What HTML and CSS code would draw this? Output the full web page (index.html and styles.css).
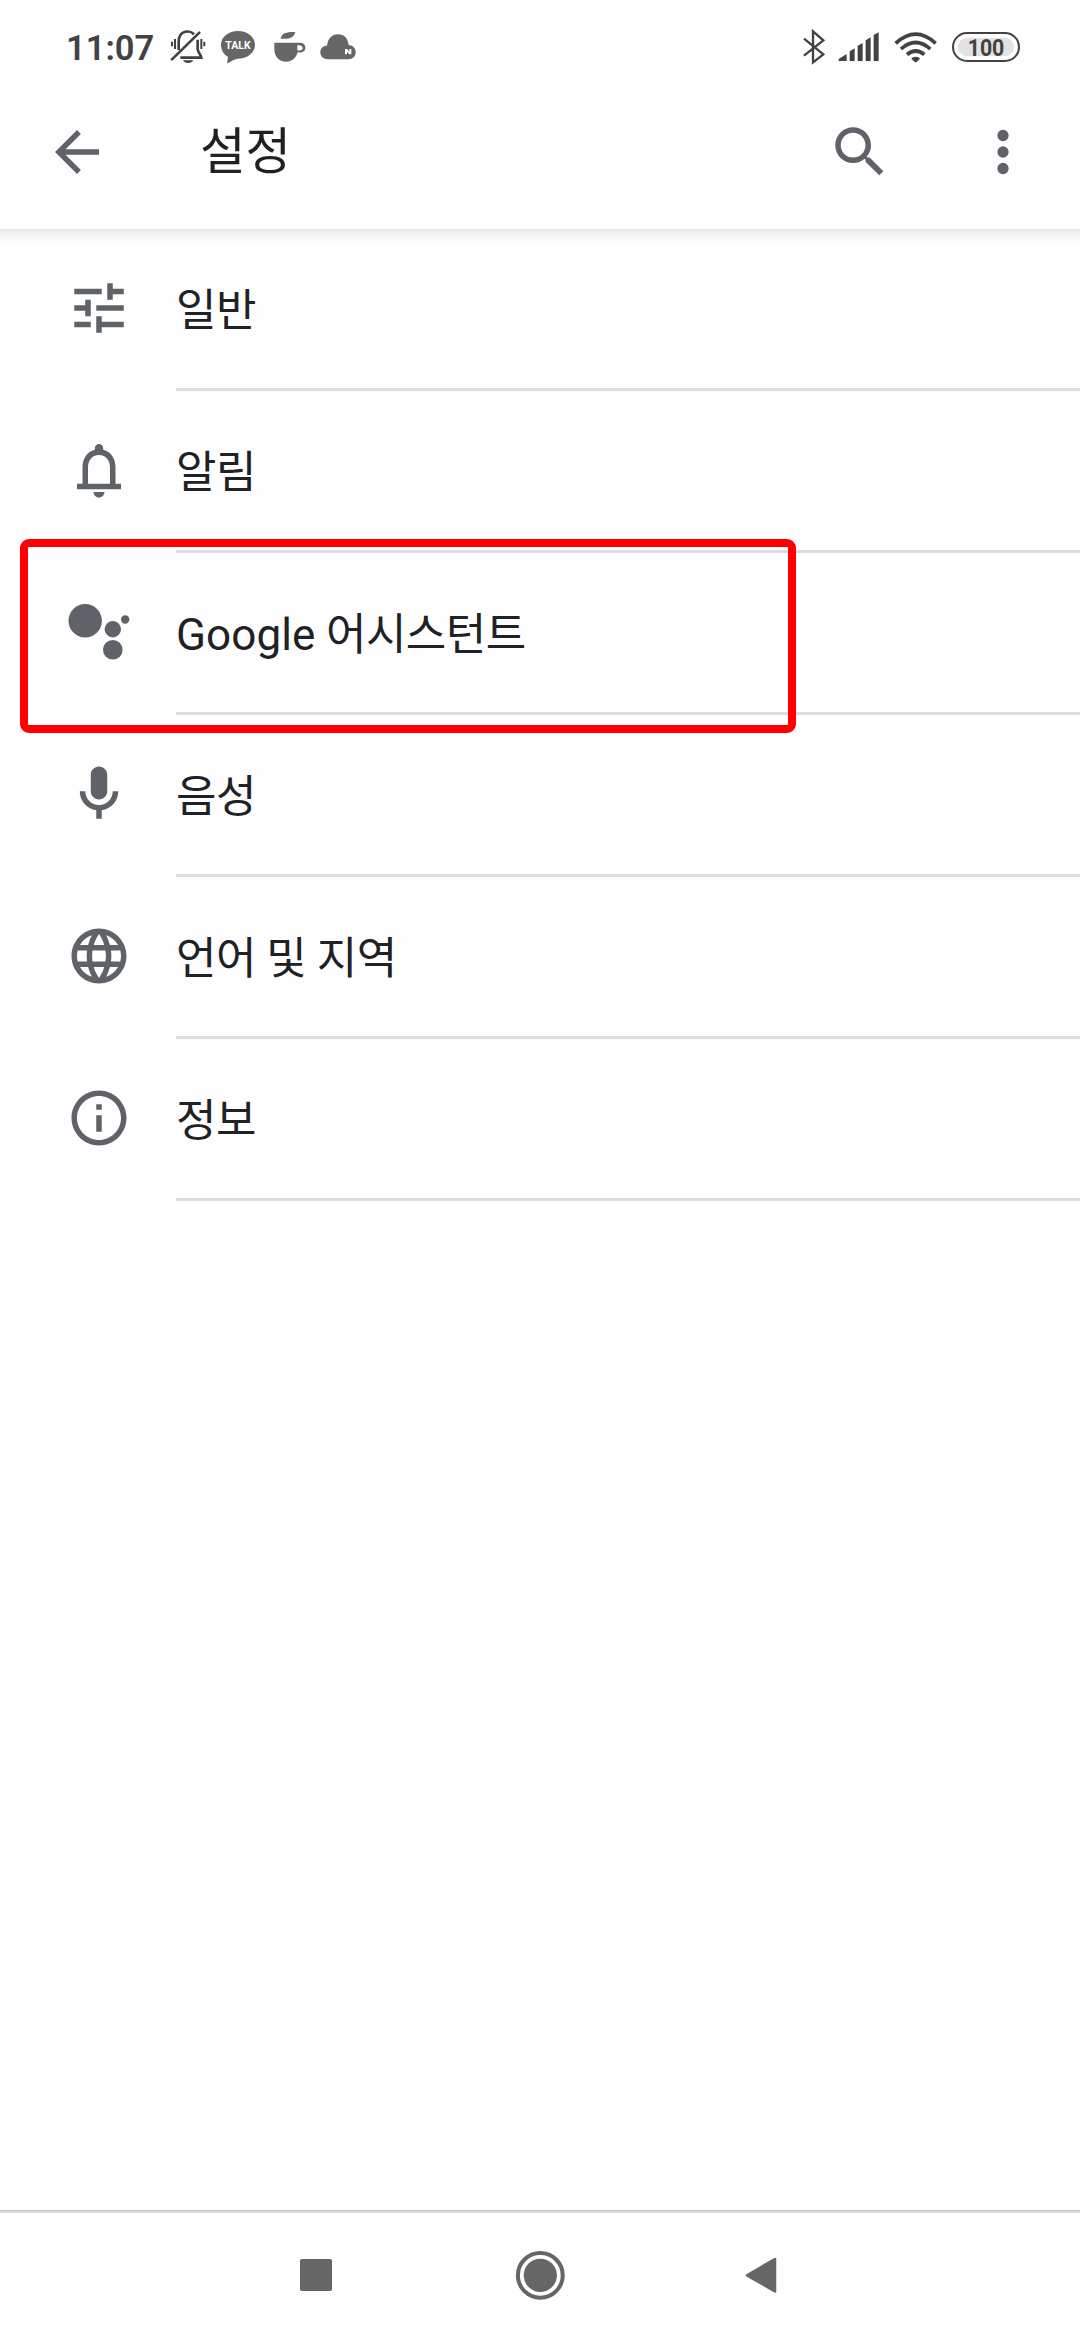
FILE: index.html
```html
<!DOCTYPE html>
<html lang="ko">
<head>
<meta charset="utf-8">
<title>설정</title>
<link rel="stylesheet" href="styles.css">
</head>
<body>
<div class="screen">
  <header class="status">
    <span class="clock">11:07</span>
    <div class="status-left">
      <svg width="36" height="34" viewBox="360 30 108 102" fill="none" stroke="#424242" stroke-width="8">
        <path d="M386 90V66C386 28 422 30 432 43"/>
        <path d="M366 118L448 38" stroke-linecap="round"/>
        <path d="M443 59V88C443 96 452 101 454 113H391"/>
        <path d="M366 65V79M375 57V87M454 57V87M463 65V79" stroke-width="6"/>
        <path d="M399 121H430C425 132 404 132 399 121Z" fill="#424242" stroke="none"/>
      </svg>
      <svg class="talk" width="36" height="34" viewBox="510 30 108 102">
        <path d="M564 33C592 33 615 51 615 74C615 98 592 116 562 116C552 118 543 124 533 130C530 128 534 116 534 110C521 103 513 90 513 74C513 51 536 33 564 33Z" fill="#666"/>
        <text x="526" y="88" textLength="76" lengthAdjust="spacingAndGlyphs">TALK</text>
      </svg>
      <svg class="cup" width="32" height="32" viewBox="671 34 96 96" fill="#666">
        <path d="M691 57C694 42 704 36 735 37C730 54 719 59 691 57Z"/>
        <path d="M672 69H744V70C756 68 765 74 765 84C765 95 756 100 742 98C737 116 724 126 708 126C686 126 672 111 672 88ZM741 77V92C752 94 757 91 757 85C757 79 751 75 741 77Z" fill-rule="evenodd"/>
      </svg>
      <svg width="36" height="26" viewBox="810 41 108 78">
        <path d="M833 117C820 117 811 108 811 96C811 84 819 76 831 76C834 54 846 42 864 42C882 42 894 54 896 74C909 75 917 84 917 96C917 108 908 117 895 117Z" fill="#666"/>
        <path d="M885 102V86H891L898 94V86H904V102H898L891 94V102Z" fill="#fff"/>
      </svg>
    </div>
    <div class="status-right">
      <svg width="22" height="36" viewBox="68 27 66 108" fill="none" stroke="#424242" stroke-width="7">
        <path d="M71 56L129 103L98 127V34L129 61L71 107"/>
      </svg>
      <svg class="signal" width="42" height="30" viewBox="172 35 126 90" fill="#424242">
        <path d="M174 122V116L198 101V122ZM207 122V93L222 84V122ZM231 122V76L246 68V122ZM255 122V60L270 51V122ZM279 122V44L294 36V122Z"/>
      </svg>
      <svg class="wifi" width="44" height="32" viewBox="340 32 132 96" fill="none" stroke="#424242" stroke-width="11">
        <path d="M345 69Q405 14 465 69"/>
        <path d="M361 86Q405 47 449 86"/>
        <path d="M379 103Q405 81 431 103"/>
        <path d="M392 115C396 107 414 107 418 115L407 126H403Z" fill="#424242" stroke="none"/>
      </svg>
      <svg class="battery" width="68" height="30" viewBox="516 36 204 90">
        <rect x="519" y="39" width="198" height="84" rx="42" fill="none" stroke="#424242" stroke-width="6"/>
        <rect x="534" y="53" width="168" height="56" rx="28" fill="#e2e2e2"/>
        <text x="563" y="107" textLength="110" lengthAdjust="spacingAndGlyphs">100</text>
      </svg>
    </div>
  </header>

  <div class="appbar">
    <svg class="icon" viewBox="0 0 24 24"><path d="M20 11H7.83l5.59-5.59L12 4l-8 8 8 8 1.41-1.41L7.83 13H20v-2z"/></svg>
    <h1 class="title">설정</h1>
    <svg class="icon" viewBox="0 0 24 24"><path d="M15.5 14h-.79l-.28-.27C15.41 12.59 16 11.11 16 9.5 16 5.91 13.09 3 9.5 3S3 5.91 3 9.5 5.91 16 9.5 16c1.61 0 3.09-.59 4.23-1.57l.27.28v.79l5 4.99L20.49 19l-4.99-5zm-6 0C7.01 14 5 11.99 5 9.5S7.01 5 9.5 5 14 7.01 14 9.5 11.99 14 9.5 14z"/></svg>
    <svg class="icon more" viewBox="0 0 24 24"><circle cx="12" cy="6" r="2.05"/><circle cx="12" cy="12" r="2.05"/><circle cx="12" cy="18" r="2.05"/></svg>
  </div>

  <ul class="list">
    <li class="row">
      <svg class="icon" viewBox="0 0 24 24"><path d="M3 17v2h6v-2H3zM3 5v2h10V5H3zm10 16v-2h8v-2h-8v-2h-2v6h2zM7 9v2H3v2h4v2h2V9H7zm14 4v-2H11v2h10zm-6-4h2V7h4V5h-4V3h-2v6z"/></svg>
      <span class="label">일반</span>
    </li>
    <li class="row">
      <svg class="icon" viewBox="0 0 24 24"><path d="M18 17v-6c0-3.07-1.63-5.64-4.5-6.32V4c0-.83-.67-1.5-1.5-1.5s-1.5.67-1.5 1.5v.68C7.64 5.36 6 7.92 6 11v6H4v2h16v-2h-2zm-2 0H8v-6c0-2.48 1.51-4.5 4-4.5s4 2.02 4 4.5v6zM12 22c1.1 0 2-.9 2-2h-4c0 1.1.9 2 2 2z"/></svg>
      <span class="label">알림</span>
    </li>
    <li class="row marked">
      <svg class="icon" viewBox="66 599 66 66"><circle cx="85.2" cy="620.8" r="16.7"/><circle cx="112.800" cy="629.3" r="8.2"/><circle cx="125.2" cy="619.5" r="4.2"/><circle cx="112.8" cy="649.8" r="9.8"/></svg>
      <span class="label"><span class="latin">Google</span> 어시스턴트</span>
    </li>
    <li class="row">
      <svg class="icon" viewBox="0 0 24 24"><path d="M12 14c1.66 0 3-1.34 3-3V5c0-1.66-1.34-3-3-3S9 3.34 9 5v6c0 1.66 1.34 3 3 3zM17 11c0 2.76-2.24 5-5 5s-5-2.24-5-5H5c0 3.53 2.61 6.43 6 6.92V21h2v-3.08c3.39-.49 6-3.39 6-6.92h-2z"/></svg>
      <span class="label">음성</span>
    </li>
    <li class="row">
      <svg class="icon" viewBox="0 0 24 24"><path d="M11.99 2C6.47 2 2 6.48 2 12s4.47 10 9.99 10C17.52 22 22 17.52 22 12S17.52 2 11.99 2zm6.93 6h-2.95c-.32-1.25-.78-2.45-1.38-3.56 1.84.63 3.37 1.91 4.33 3.56zM12 4.04c.83 1.2 1.48 2.53 1.91 3.96h-3.82c.43-1.43 1.08-2.76 1.91-3.96zM4.26 14C4.1 13.36 4 12.69 4 12s.1-1.36.26-2h3.38c-.08.66-.14 1.32-.14 2 0 .68.06 1.34.14 2H4.26zm.82 2h2.95c.32 1.25.78 2.45 1.38 3.56-1.84-.63-3.37-1.9-4.33-3.56zm2.95-8H5.08c.96-1.66 2.49-2.93 4.33-3.56C8.81 5.55 8.35 6.75 8.03 8zM12 19.96c-.83-1.2-1.48-2.53-1.91-3.96h3.82c-.43 1.43-1.08 2.76-1.91 3.96zM14.34 14H9.66c-.09-.66-.16-1.32-.16-2 0-.68.07-1.35.16-2h4.68c.09.65.16 1.32.16 2 0 .68-.07 1.34-.16 2zm.25 5.56c.6-1.11 1.06-2.31 1.38-3.56h2.95c-.96 1.65-2.49 2.93-4.33 3.56zM16.36 14c.08-.66.14-1.32.14-2 0-.68-.06-1.34-.14-2h3.38c.16.64.26 1.31.26 2s-.1 1.36-.26 2h-3.38z"/></svg>
      <span class="label">언어 및 지역</span>
    </li>
    <li class="row">
      <svg class="icon" viewBox="0 0 24 24"><path d="M11 7h2v2h-2zm0 4h2v6h-2zm1-9C6.48 2 2 6.48 2 12s4.48 10 10 10 10-4.48 10-10S17.52 2 12 2zm0 18c-4.41 0-8-3.59-8-8s3.59-8 8-8 8 3.59 8 8-3.59 8-8 8z"/></svg>
      <span class="label">정보</span>
    </li>
  </ul>

  <nav class="navbar">
    <svg width="32" height="32" viewBox="0 0 32 32"><rect width="32" height="32" rx="2"/></svg>
    <svg class="home" width="50" height="50" viewBox="0 0 50 50"><circle cx="25.3" cy="25.3" r="22.4" fill="none" stroke="#666" stroke-width="4"/><circle cx="25.3" cy="25.3" r="16.6"/></svg>
    <svg class="back" width="32" height="38" viewBox="0 0 32 38"><path d="M2 19.3L30 3V35.5Z" stroke="#666" stroke-width="2.5" stroke-linejoin="round"/></svg>
  </nav>
</div>
</body>
</html>
```
FILE: styles.css
```css
*,
*::after {
  box-sizing: border-box;
}

body {
  margin: 0;
  background: #fefefe;
  font-family: Roboto, "Noto Sans CJK KR", sans-serif;
  color: #202124;
}

svg {
  display: block;
  flex: none;
}

.screen {
  display: flex;
  flex-direction: column;
  width: 1080px;
  height: 2340px;
}

.status {
  display: flex;
  align-items: center;
  height: 94px;
  padding: 0 60px 0 66px;
}

.clock {
  width: 104px;
  padding-top: 2px;
  font-size: 34.5px;
  font-weight: 600;
  line-height: 40px;
  color: #424242;
}

.status-left,
.status-right {
  display: flex;
  align-items: center;
}

.status-left {
  gap: 14px;
}

.talk {
  font: 700 35px Roboto, sans-serif;
  fill: #fff;
}

.cup {
  margin-left: 4px;
}

.status-right {
  margin-left: auto;
}

.signal {
  margin-left: 13px;
}

.wifi {
  margin-left: 14px;
}

.battery {
  margin-left: 14px;
  font: 700 70px Roboto, sans-serif;
  fill: #424242;
}

.icon {
  width: 66px;
  height: 66px;
  fill: #5f6368;
}

.appbar {
  display: flex;
  align-items: center;
  height: 135px;
  padding: 0 44px 19px;
}

.title {
  flex: 1;
  margin: 0 0 0 90px;
  font-size: 49.5px;
  font-weight: 400;
  line-height: 72px;
}

.more {
  margin-left: 77px;
}

.list {
  flex: 1;
  margin: 0;
  padding: 0;
  list-style: none;
  background: linear-gradient(#e2e2e2, #ececec 2px, #f6f6f6 7px, #fefefe 15px);
}

.row {
  display: flex;
  align-items: flex-start;
  height: 162px;
  padding-left: 66px;
}

.row .icon {
  margin-top: 46px;
}

.label {
  flex: 1;
  height: 162px;
  margin-left: 44px;
  padding-top: 3px;
  border-bottom: 3px solid #dadce0;
  font-size: 44px;
  line-height: 159px;
  letter-spacing: -0.5px;
}

.latin {
  letter-spacing: 0.1px;
}

.marked {
  position: relative;
}

.marked .icon {
  overflow: visible;
}

/* highlight frame drawn over the neighbouring dividers */
.marked::after {
  content: "";
  position: absolute;
  left: 19.5px;
  top: -14.5px;
  width: 776px;
  height: 194px;
  border: 8px solid #f00;
  border-radius: 9px;
}

.navbar {
  display: flex;
  align-items: center;
  height: 130px;
  padding-left: 300px;
  background: linear-gradient(#c6c8ca 1px, #dadce0 1px, #dadce0 3px, #fefefe 3px);
  fill: #666;
}

.home {
  margin-left: 183px;
}

.back {
  margin-left: 180px;
}
```
